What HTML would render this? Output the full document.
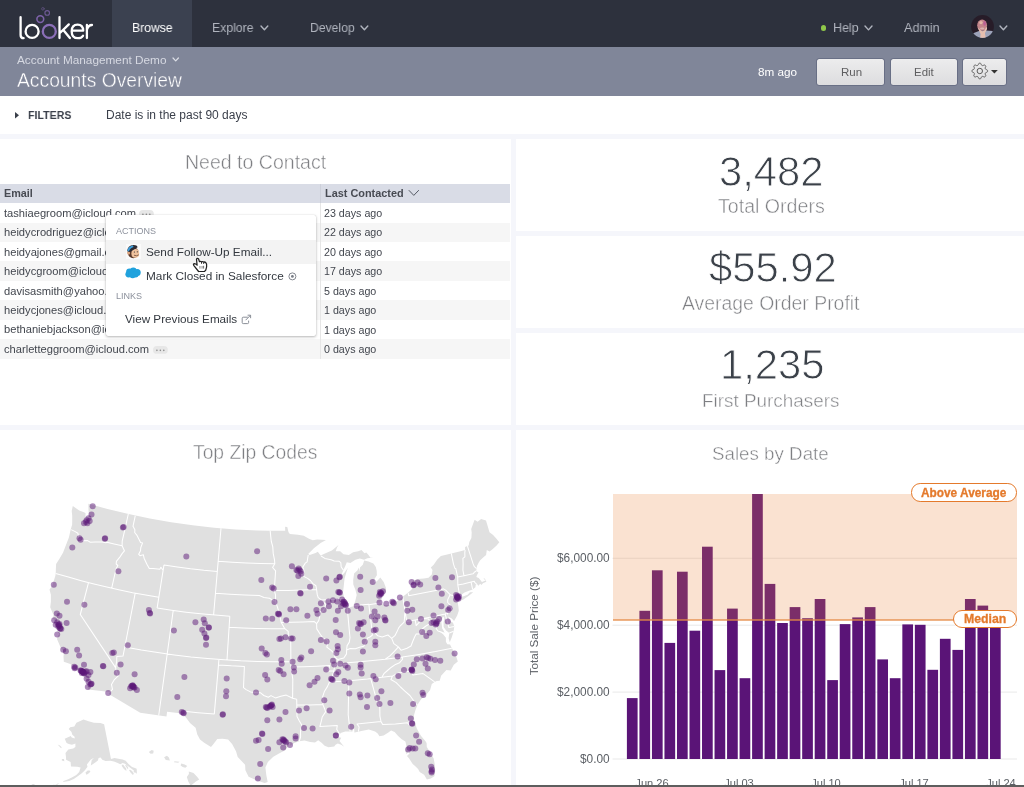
<!DOCTYPE html>
<html>
<head>
<meta charset="utf-8">
<title>Accounts Overview</title>
<style>
*{box-sizing:border-box;margin:0;padding:0}
html,body{width:1024px;height:787px;overflow:hidden;background:#f5f6fb;font-family:"Liberation Sans",sans-serif;color:#3a3f4a}
.abs{position:absolute}
.t{position:absolute;white-space:nowrap;will-change:transform}
#nav{position:absolute;left:0;top:0;width:1024px;height:47px;background:#2d313d}
#nav .tab{position:absolute;left:112px;top:0;width:80px;height:47px;background:#3b4150}
#sub{position:absolute;left:0;top:47px;width:1024px;height:49px;background:#808699}
#filters{position:absolute;left:0;top:96px;width:1024px;height:37.5px;background:#fff}
.panel{position:absolute;background:#fff}
.btn{position:absolute;top:59px;height:25.8px;border-radius:2.5px;background:linear-gradient(#ececed,#dddddf);box-shadow:0 0 0 .8px rgba(75,82,108,.55)}
.big{-webkit-text-stroke:.9px #fff}
.lt{-webkit-text-stroke:.45px #fff}
.lts{-webkit-text-stroke:.4px #808699}
.row{position:absolute;left:0;width:510px;height:19.43px}
</style>
</head>
<body>
<div id="nav"><div class="tab"></div></div>
<svg class="abs" style="left:0;top:0" width="112" height="47" viewBox="0 0 112 47" fill="none" stroke-linecap="round" stroke-linejoin="round">
<path d="M20.6 17.2V34.9Q20.6 38.2 23.6 38.2" stroke="#fff" stroke-width="2.3"/>
<circle cx="32.1" cy="31.4" r="6.5" stroke="#fff" stroke-width="2.3"/>
<circle cx="49.3" cy="31.4" r="6.5" stroke="#8b6fb8" stroke-width="2.3"/>
<circle cx="40.3" cy="19.1" r="3.4" stroke="#7d62a9" stroke-width="1.6"/>
<circle cx="47.2" cy="12.9" r="2.3" stroke="#6f5a96" stroke-width="1.1"/>
<circle cx="42.9" cy="8.8" r="1.3" stroke="#5f5280" stroke-width="0.8"/>
<path d="M59.5 17.2V38.1M60.2 32.8L68.8 24.4M63.3 30L69.9 38.1" stroke="#fff" stroke-width="2.3"/>
<path d="M72.6 30.7H83.2Q83 24.7 77.6 24.7Q71.7 24.7 71.7 31.4Q71.7 38.2 78 38.2Q81.3 38.2 83 35.8" stroke="#fff" stroke-width="2.3"/>
<path d="M86.9 25V38.1M86.9 29.8Q88.2 25 92 25" stroke="#fff" stroke-width="2.3"/>
</svg>
<div class="t" style="left:131.70px;top:17.90px;font-size:13.0px;line-height:20px;color:#fff;transform:scaleX(0.938);transform-origin:0 0;">Browse</div>
<div class="t" style="left:212.20px;top:17.90px;font-size:13.0px;line-height:20px;color:#b0b4be;transform:scaleX(0.942);transform-origin:0 0;">Explore</div>
<svg class="abs" style="left:258.7px;top:24.4px" width="10.8" height="7.7"><path d="M2 2L5.40 5.74L8.80 2" fill="none" stroke="#b0b4be" stroke-width="1.4" stroke-linecap="round" stroke-linejoin="round"/></svg>
<div class="t" style="left:309.50px;top:17.90px;font-size:13.0px;line-height:20px;color:#b0b4be;transform:scaleX(0.938);transform-origin:0 0;">Develop</div>
<svg class="abs" style="left:359.0px;top:24.4px" width="10.8" height="7.7"><path d="M2 2L5.40 5.74L8.80 2" fill="none" stroke="#b0b4be" stroke-width="1.4" stroke-linecap="round" stroke-linejoin="round"/></svg>
<div class="abs" style="left:820.7px;top:24.8px;width:5.8px;height:5.8px;border-radius:50%;background:#8fc74a"></div>
<div class="t" style="left:833.30px;top:17.90px;font-size:13.0px;line-height:20px;color:#b0b4be;transform:scaleX(0.96);transform-origin:0 0;">Help</div>
<svg class="abs" style="left:863.4px;top:24.4px" width="11.0" height="7.9"><path d="M2 2L5.50 5.85L9.00 2" fill="none" stroke="#b0b4be" stroke-width="1.4" stroke-linecap="round" stroke-linejoin="round"/></svg>
<div class="t" style="left:904.10px;top:17.90px;font-size:13.0px;line-height:20px;color:#b0b4be;transform:scaleX(0.97);transform-origin:0 0;">Admin</div>
<svg class="abs" style="left:971px;top:15px" width="23" height="23" viewBox="0 0 23 23">
<defs><clipPath id="av"><circle cx="11.5" cy="11.5" r="11.4"/></clipPath></defs>
<g clip-path="url(#av)"><rect width="23" height="23" fill="#271c28"/>
<path d="M2.2 18.2L9.2 15.6H15.2L21.7 16.1L23 23H0Z" fill="#9ca3ba"/>
<ellipse cx="11.1" cy="10.2" rx="4.9" ry="5.6" fill="#c4858a"/>
<ellipse cx="10" cy="7.6" rx="1.7" ry="1.6" fill="#e3b8a6"/>
<ellipse cx="13.6" cy="8.4" rx="1.3" ry="2.4" fill="#b8509a" opacity=".7"/>
<ellipse cx="11.2" cy="13.6" rx="2.2" ry="1" fill="#e0c0b8" opacity=".8"/>
<path d="M6.3 12.2L8.7 14.3L11.3 16.5L13.5 15.2L15.6 11.3L16.1 13.9L13.9 18.2L14.8 22.7H9.2L9.6 19.1L7.9 15.2Z" fill="#e6bfb0"/>
</g></svg>
<svg class="abs" style="left:998.4px;top:24.4px" width="10.8" height="7.7"><path d="M2 2L5.40 5.74L8.80 2" fill="none" stroke="#b0b4be" stroke-width="1.4" stroke-linecap="round" stroke-linejoin="round"/></svg>
<div id="sub"></div>
<div class="t" style="left:17.20px;top:49.51px;font-size:11.8px;line-height:20px;color:#d6d9e2;">Account Management Demo</div>
<svg class="abs" style="left:171.2px;top:56.1px" width="9.4" height="7.0"><path d="M2 2L4.70 4.97L7.40 2" fill="none" stroke="#dcdfe7" stroke-width="1.2" stroke-linecap="round" stroke-linejoin="round"/></svg>
<div class="t lts" style="left:16.80px;top:70.71px;font-size:19.3px;line-height:20px;color:#fff;">Accounts Overview</div>
<div class="t" style="left:758.30px;top:62.25px;font-size:11.7px;line-height:20px;color:#fff;">8m ago</div>
<div class="btn" style="left:817px;width:67px"></div>
<div class="btn" style="left:890.5px;width:66.5px"></div>
<div class="btn" style="left:962.7px;width:43.5px"></div>
<div class="t" style="left:840.60px;top:62.22px;font-size:11.5px;line-height:20px;color:#5e5e60;">Run</div>
<div class="t" style="left:913.90px;top:62.23px;font-size:11.45px;line-height:20px;color:#5e5e60;">Edit</div>
<svg class="abs" style="left:970px;top:61px" width="20" height="20"><path d="M9.80 2.20L10.11 2.22L10.41 2.28L10.70 2.43L10.95 2.74L11.15 3.23L11.31 3.73L11.48 4.05L11.67 4.24L11.88 4.36L12.10 4.46L12.32 4.54L12.55 4.60L12.82 4.61L13.17 4.50L13.63 4.26L14.12 4.06L14.52 4.02L14.83 4.11L15.09 4.28L15.32 4.48L15.52 4.71L15.69 4.97L15.78 5.28L15.74 5.68L15.54 6.17L15.30 6.63L15.19 6.98L15.20 7.25L15.26 7.48L15.34 7.70L15.44 7.92L15.56 8.13L15.75 8.32L16.07 8.49L16.57 8.65L17.06 8.85L17.37 9.10L17.52 9.39L17.58 9.69L17.60 10.00L17.58 10.31L17.52 10.61L17.37 10.90L17.06 11.15L16.57 11.35L16.07 11.51L15.75 11.68L15.56 11.87L15.44 12.08L15.34 12.30L15.26 12.52L15.20 12.75L15.19 13.02L15.30 13.37L15.54 13.83L15.74 14.32L15.78 14.72L15.69 15.03L15.52 15.29L15.32 15.52L15.09 15.72L14.83 15.89L14.52 15.98L14.12 15.94L13.63 15.74L13.17 15.50L12.82 15.39L12.55 15.40L12.32 15.46L12.10 15.54L11.88 15.64L11.67 15.76L11.48 15.95L11.31 16.27L11.15 16.77L10.95 17.26L10.70 17.57L10.41 17.72L10.11 17.78L9.80 17.80L9.49 17.78L9.19 17.72L8.90 17.57L8.65 17.26L8.45 16.77L8.29 16.27L8.12 15.95L7.93 15.76L7.72 15.64L7.50 15.54L7.28 15.46L7.05 15.40L6.78 15.39L6.43 15.50L5.97 15.74L5.48 15.94L5.08 15.98L4.77 15.89L4.51 15.72L4.28 15.52L4.08 15.29L3.91 15.03L3.82 14.72L3.86 14.32L4.06 13.83L4.30 13.37L4.41 13.02L4.40 12.75L4.34 12.52L4.26 12.30L4.16 12.08L4.04 11.87L3.85 11.68L3.53 11.51L3.03 11.35L2.54 11.15L2.23 10.90L2.08 10.61L2.02 10.31L2.00 10.00L2.02 9.69L2.08 9.39L2.23 9.10L2.54 8.85L3.03 8.65L3.53 8.49L3.85 8.32L4.04 8.13L4.16 7.92L4.26 7.70L4.34 7.48L4.40 7.25L4.41 6.98L4.30 6.63L4.06 6.17L3.86 5.68L3.82 5.28L3.91 4.97L4.08 4.71L4.28 4.48L4.51 4.28L4.77 4.11L5.08 4.02L5.48 4.06L5.97 4.26L6.43 4.50L6.78 4.61L7.05 4.60L7.28 4.54L7.50 4.46L7.72 4.36L7.93 4.24L8.12 4.05L8.29 3.73L8.45 3.23L8.65 2.74L8.90 2.43L9.19 2.28L9.49 2.22Z" fill="none" stroke="#555" stroke-width=".95" stroke-linejoin="round"/><circle cx="9.8" cy="10.0" r="2.7" fill="none" stroke="#555" stroke-width=".95"/></svg>
<svg class="abs" style="left:990.8px;top:69.6px" width="8" height="5"><path d="M0 0H6.8L3.4 3.6Z" fill="#333"/></svg>
<div id="filters"></div>
<svg class="abs" style="left:15px;top:111.6px" width="5" height="7"><path d="M0 0L4 3.2L0 6.4Z" fill="#3a3f4a"/></svg>
<div class="t" style="left:28.20px;top:105.21px;font-size:11.8px;line-height:20px;color:#3a3f4a;font-weight:bold;transform:scaleX(0.898);transform-origin:0 0;">FILTERS</div>
<div class="t" style="left:106.10px;top:105.04px;font-size:12.0px;line-height:20px;color:#3a3f4a;">Date is in the past 90 days</div>
<div class="panel" style="left:0;top:138.5px;width:510.9px;height:286.5px"></div>
<div class="panel" style="left:515.7px;top:138.5px;width:508.5px;height:92.8px"></div>
<div class="panel" style="left:515.7px;top:235.5px;width:508.5px;height:92.5px"></div>
<div class="panel" style="left:515.7px;top:332.5px;width:508.5px;height:92.5px"></div>
<div class="panel" style="left:0;top:429.7px;width:510.9px;height:358px"></div>
<div class="panel" style="left:515.7px;top:429.7px;width:508.5px;height:358px"></div>
<div class="t lt" style="left:185.00px;top:151.98px;font-size:19.55px;line-height:20px;color:#7e7f83;">Need to Contact</div>
<div class="abs" style="left:0;top:183.8px;width:510px;height:19.4px;background:#d9dce6"></div>
<div class="t" style="left:3.75px;top:182.76px;font-size:10.8px;line-height:20px;color:#484b53;font-weight:bold;">Email</div>
<div class="t" style="left:324.50px;top:182.72px;font-size:10.9px;line-height:20px;color:#484b53;font-weight:bold;">Last Contacted</div>
<svg class="abs" style="left:407px;top:188px" width="14" height="10"><path d="M1.8 2.2L6.8 7.4L11.8 2.2" fill="none" stroke="#555a64" stroke-width="1"/></svg>
<div class="t" style="left:3.75px;top:202.79px;font-size:11.15px;line-height:20px;color:#42464e;">tashiaegroom@icloud.com</div>
<div class="t" style="left:324.25px;top:202.94px;font-size:10.7px;line-height:20px;color:#42464e;">23 days ago</div>
<div class="row" style="top:222.63px;background:#f6f6f6"></div>
<div class="t" style="left:3.75px;top:222.22px;font-size:11.15px;line-height:20px;color:#42464e;">heidycrodriguez@icloud.com</div>
<div class="t" style="left:324.25px;top:222.37px;font-size:10.7px;line-height:20px;color:#42464e;">22 days ago</div>
<div class="t" style="left:3.75px;top:241.65px;font-size:11.15px;line-height:20px;color:#42464e;">heidyajones@gmail.com</div>
<div class="t" style="left:324.25px;top:241.80px;font-size:10.7px;line-height:20px;color:#42464e;">20 days ago</div>
<div class="row" style="top:261.49px;background:#f6f6f6"></div>
<div class="t" style="left:3.75px;top:261.08px;font-size:11.15px;line-height:20px;color:#42464e;">heidycgroom@icloud.com</div>
<div class="t" style="left:324.25px;top:261.23px;font-size:10.7px;line-height:20px;color:#42464e;">17 days ago</div>
<div class="t" style="left:3.75px;top:280.51px;font-size:11.15px;line-height:20px;color:#42464e;">davisasmith@yahoo.com</div>
<div class="t" style="left:324.25px;top:280.66px;font-size:10.7px;line-height:20px;color:#42464e;">5 days ago</div>
<div class="row" style="top:300.35px;background:#f6f6f6"></div>
<div class="t" style="left:3.75px;top:299.94px;font-size:11.15px;line-height:20px;color:#42464e;">heidycjones@icloud.com</div>
<div class="t" style="left:324.25px;top:300.09px;font-size:10.7px;line-height:20px;color:#42464e;">1 days ago</div>
<div class="t" style="left:3.75px;top:319.37px;font-size:11.15px;line-height:20px;color:#42464e;">bethaniebjackson@icloud.com</div>
<div class="t" style="left:324.25px;top:319.52px;font-size:10.7px;line-height:20px;color:#42464e;">1 days ago</div>
<div class="row" style="top:339.21px;background:#f6f6f6"></div>
<div class="t" style="left:3.75px;top:338.80px;font-size:11.15px;line-height:20px;color:#42464e;">charletteggroom@icloud.com</div>
<div class="t" style="left:324.25px;top:338.95px;font-size:10.7px;line-height:20px;color:#42464e;">0 days ago</div>
<div class="abs" style="left:319.6px;top:203.2px;width:1px;height:155.4px;background:#e6e6e6"></div>
<div class="abs" style="left:319.6px;top:183.8px;width:1px;height:19.4px;background:#cdd0da"></div>
<svg class="abs" style="left:139.4px;top:210.1px" width="15" height="8"><rect width="14.8" height="7.8" rx="3.9" fill="#e7e7e7"/><circle cx="3.9" cy="4.35" r=".8" fill="#8a8a8a"/><circle cx="7.35" cy="4.35" r=".8" fill="#8a8a8a"/><circle cx="10.8" cy="4.35" r=".8" fill="#8a8a8a"/></svg>
<svg class="abs" style="left:153px;top:345.8px" width="15" height="8"><rect width="14.8" height="7.8" rx="3.9" fill="#e7e7e7"/><circle cx="3.9" cy="4.35" r=".8" fill="#8a8a8a"/><circle cx="7.35" cy="4.35" r=".8" fill="#8a8a8a"/><circle cx="10.8" cy="4.35" r=".8" fill="#8a8a8a"/></svg>
<div class="abs" style="left:105.5px;top:215px;width:210px;height:120.8px;background:#fff;border-radius:2px;box-shadow:0 1px 3px rgba(0,0,0,.28),0 0 1px rgba(0,0,0,.22)"></div>
<div class="abs" style="left:105.5px;top:240.1px;width:210px;height:23.6px;background:#f3f3f3"></div>
<div class="t" style="left:115.50px;top:220.63px;font-size:9.0px;line-height:20px;color:#8c919c;">ACTIONS</div>
<div class="t" style="left:145.75px;top:242.18px;font-size:11.75px;line-height:20px;color:#33383f;">Send Follow-Up Email...</div>
<div class="t" style="left:146.25px;top:265.91px;font-size:11.8px;line-height:20px;color:#33383f;">Mark Closed in Salesforce</div>
<div class="t" style="left:115.50px;top:286.38px;font-size:9.0px;line-height:20px;color:#8c919c;">LINKS</div>
<div class="t" style="left:125.00px;top:308.95px;font-size:11.7px;line-height:20px;color:#33383f;">View Previous Emails</div>
<svg class="abs" style="left:125.5px;top:244.3px" width="15" height="15" viewBox="0 0 15 15">
<rect width="15" height="15" fill="#fafafa"/>
<ellipse cx="7.2" cy="8.6" rx="5.4" ry="5.6" fill="#5a3a2c"/>
<ellipse cx="2.6" cy="9" rx="1.5" ry="1.8" fill="#d9a27e"/>
<ellipse cx="9.3" cy="9.4" rx="3.9" ry="4.3" fill="#efc29d"/>
<path d="M1.2 7.2Q1.5 1.2 7.5 0.9Q11 0.8 11.6 3.2L4 8Z" fill="#2b2b33"/>
<path d="M1.3 6.6Q2.2 2.3 6.8 1.4L7.6 3Q3.8 4.2 2.9 7.4Z" fill="#3d9fdc"/>
<path d="M8 11.2Q10.5 12.6 12.8 10.8" fill="none" stroke="#5a3a2c" stroke-width=".7"/>
<circle cx="8.4" cy="8" r=".6" fill="#2b2b33"/><circle cx="11.3" cy="7.8" r=".6" fill="#2b2b33"/>
</svg>
<svg class="abs" style="left:124.8px;top:266.8px" width="16.5" height="12" viewBox="0 0 16.5 12">
<g fill="#20a2dd"><circle cx="4.4" cy="4.6" r="3.2"/><circle cx="8.3" cy="3.9" r="3.3"/><circle cx="12.2" cy="5.6" r="3.5"/><circle cx="3.5" cy="7.3" r="3.1"/><circle cx="7.6" cy="7.8" r="3.4"/><circle cx="10.6" cy="7.6" r="3"/></g>
</svg>
<svg class="abs" style="left:287.6px;top:271.9px" width="9" height="9"><circle cx="4.4" cy="4.4" r="3.5" fill="none" stroke="#777c85" stroke-width=".9"/><circle cx="4.4" cy="4.4" r="1.4" fill="#777c85"/></svg>
<svg class="abs" style="left:241px;top:313.6px" width="11" height="11" fill="none" stroke="#8a8f98" stroke-width="1"><path d="M6.8 3.2H2.2Q1.2 3.2 1.2 4.2V8.6Q1.2 9.6 2.2 9.6H6.6Q7.6 9.6 7.6 8.6V6.6"/><path d="M4.6 6.2L9.6 1.2M6.6 1.2H9.6V4.2"/></svg>
<svg class="abs" style="left:192px;top:257px" width="17" height="17" viewBox="0 0 17 17">
<path d="M4.5 2.2Q5.2 0.9 6.5 1.7L7.5 4.7Q8.6 3.9 9.5 4.9Q10.8 4.1 11.7 5.1Q13 4.7 14 5.9L14.6 7.2Q15 10 13.8 13L12.6 14.4L6.6 14.5L1.7 8.3Q1 7 2.2 6.6Q3.6 6.5 5.1 8.2Z" fill="#fff" stroke="#222" stroke-width="1.25" stroke-linejoin="round"/>
<path d="M9.5 5V6.8M11.7 5.2V7" stroke="#222" stroke-width=".9"/>
<path d="M7.7 9V11.6M9 9V11.6M10.3 9V11.6" stroke="#8a8a8a" stroke-width=".7"/><path d="M11.6 8.8V11.6" stroke="#333" stroke-width=".7"/>
</svg>
<div class="t big" style="left:719.20px;top:146.72px;font-size:41.8px;line-height:50px;color:#3b4149;">3,482</div>
<div class="t lt" style="left:717.60px;top:196.21px;font-size:19.6px;line-height:20px;color:#7e7f83;">Total Orders</div>
<div class="t big" style="left:708.50px;top:243.42px;font-size:41.8px;line-height:50px;color:#3b4149;">$55.92</div>
<div class="t lt" style="left:682.10px;top:293.48px;font-size:19.4px;line-height:20px;color:#7e7f83;">Average Order Profit</div>
<div class="t big" style="left:719.50px;top:340.42px;font-size:41.8px;line-height:50px;color:#3b4149;">1,235</div>
<div class="t lt" style="left:702.30px;top:390.65px;font-size:18.9px;line-height:20px;color:#7e7f83;">First Purchasers</div>
<div class="t lt" style="left:193.20px;top:443.31px;font-size:19.3px;line-height:20px;color:#7e7f83;">Top Zip Codes</div>
<svg class="abs" style="left:0;top:430px" width="511" height="357" viewBox="0 0 511 357"><path d="M72.8 76.0L79.2 80.5L83.3 82.1L85.5 83.0L85.6 88.7L82.0 93.2L85.8 92.1L86.8 88.4L88.9 85.1L88.5 79.9L88.4 73.8L107.5 79.0L128.6 84.1L149.8 88.5L171.1 92.2L192.6 95.3L214.1 97.7L235.7 99.4L257.4 100.4L270.4 100.7L285.2 100.7L285.1 96.7L287.3 97.0L288.5 102.3L289.9 103.9L297.9 104.8L303.8 105.7L309.0 108.7L312.8 110.2L317.1 109.4L326.0 110.0L320.6 113.0L313.9 118.2L308.2 124.1L309.7 124.9L315.6 123.0L317.8 121.8L320.6 125.5L326.1 122.9L331.9 120.4L338.5 115.0L336.9 117.8L335.7 121.2L340.2 121.3L343.5 124.3L348.8 124.9L353.1 122.3L358.2 121.2L361.5 120.0L364.5 123.2L366.3 122.4L368.5 124.9L370.3 127.4L373.4 127.5L367.4 128.3L364.1 129.8L359.8 128.6L355.4 129.7L350.4 132.9L346.8 132.2L345.3 136.1L343.4 140.1L340.8 146.4L344.4 142.8L347.9 137.7L346.3 142.6L344.5 148.8L343.9 154.8L343.0 162.6L344.3 168.5L346.5 175.5L349.1 177.8L353.0 175.9L355.0 171.9L356.7 165.1L355.4 159.8L353.3 154.5L353.2 150.1L354.1 143.5L357.3 140.4L358.9 137.5L359.4 141.8L360.0 137.4L362.8 134.8L364.2 130.5L368.5 131.4L373.4 133.5L375.8 137.1L376.7 140.8L376.9 145.2L374.6 148.8L373.6 152.7L376.9 151.2L380.3 147.4L383.7 151.9L386.1 158.2L385.7 162.7L382.9 165.8L381.8 169.3L379.8 173.1L384.6 175.0L388.6 175.0L394.2 173.6L399.9 168.8L405.7 164.6L411.4 159.7L413.8 155.4L411.9 151.2L417.5 148.9L423.8 148.5L428.5 147.8L431.8 144.4L432.5 140.0L430.8 137.6L433.7 134.7L437.3 129.5L440.9 125.9L451.3 123.4L461.4 120.9L465.1 119.9L465.1 117.1L468.7 115.6L469.3 112.1L471.4 108.1L471.7 102.4L471.2 99.1L474.6 89.7L477.6 91.7L481.1 89.0L486.0 90.6L489.5 102.2L493.1 105.1L496.7 109.1L499.3 112.3L496.6 115.4L492.8 118.9L489.6 121.5L486.8 120.1L486.1 124.9L482.6 128.1L480.0 130.6L478.6 132.7L477.0 135.9L476.6 138.7L476.2 141.0L478.5 142.6L477.0 145.0L476.3 146.9L478.7 148.0L480.6 150.3L481.9 152.0L485.6 150.6L483.4 148.4L484.8 148.5L486.4 151.8L483.0 153.2L481.4 154.9L480.3 153.8L478.0 156.1L475.8 154.4L475.4 157.3L472.6 159.4L468.3 160.9L464.5 162.4L461.0 164.9L459.2 166.7L458.1 168.5L458.2 169.2L463.0 166.4L467.6 164.8L469.9 162.2L473.2 162.2L468.8 165.8L463.0 169.8L458.0 171.5L457.0 171.0L457.8 172.8L458.4 176.9L458.8 180.7L457.2 185.6L454.1 191.0L451.7 188.5L448.1 186.5L447.1 184.5L448.8 188.0L450.1 191.1L453.0 192.7L454.3 196.4L453.6 201.2L451.9 207.0L449.8 212.3L448.6 208.3L449.3 203.1L446.1 200.4L443.6 197.0L443.6 192.5L444.3 187.9L443.1 186.4L441.0 190.3L441.6 193.5L442.2 198.4L443.5 200.4L444.6 203.0L438.9 201.3L442.9 203.9L445.9 207.7L445.9 211.7L447.3 214.2L450.0 214.5L451.9 218.2L455.7 224.7L457.8 231.6L453.8 234.7L450.7 240.4L446.4 240.1L441.1 245.7L439.7 250.7L436.7 251.0L434.6 251.9L431.8 254.1L430.1 260.0L427.5 263.2L424.7 265.9L421.1 269.3L418.9 272.4L417.4 275.1L415.4 280.2L413.9 285.4L414.2 290.3L415.2 293.5L416.9 298.7L420.9 305.8L425.7 311.6L426.6 313.1L426.8 316.9L430.5 322.9L433.7 328.4L434.9 335.3L435.2 341.0L434.4 346.3L430.8 348.5L426.9 349.5L424.1 344.7L419.7 342.1L418.1 339.1L415.3 336.2L412.7 333.9L409.1 328.4L407.0 325.9L409.5 323.4L408.3 321.4L406.7 324.3L405.3 321.3L406.3 315.6L405.4 311.4L401.7 309.2L397.9 305.8L394.6 301.9L391.1 300.5L388.0 302.7L383.6 305.4L379.4 306.2L377.7 303.4L375.1 301.5L368.8 299.6L361.4 300.9L358.2 301.7L354.4 302.4L354.1 298.0L352.8 299.2L352.5 301.4L349.2 301.5L345.4 301.4L341.3 302.8L339.5 304.3L337.3 305.3L334.4 304.4L331.7 306.2L336.9 307.0L341.2 307.8L339.5 311.1L342.1 314.2L344.2 316.8L341.2 314.8L337.8 313.4L335.5 314.7L334.2 316.4L328.5 317.3L324.6 315.8L321.6 312.7L318.2 310.2L315.0 312.5L310.2 312.1L304.5 310.4L299.3 311.3L294.2 313.1L290.4 315.8L289.4 311.5L289.0 315.3L285.2 320.2L279.0 323.5L273.3 326.7L267.9 332.1L265.4 337.5L266.3 345.1L267.7 352.0L264.7 353.1L257.4 350.8L248.6 346.8L245.4 340.2L245.1 334.8L237.7 326.9L236.1 321.4L232.1 314.1L228.1 309.6L222.5 308.7L217.3 308.9L213.1 314.6L211.0 316.9L207.4 314.7L204.2 312.8L200.0 309.6L197.3 304.5L195.6 297.8L190.0 292.9L186.3 288.1L182.3 283.5L167.1 281.7L166.5 286.6L140.2 282.8L108.7 264.1L109.9 261.9L88.1 259.4L87.5 255.7L87.2 251.7L83.8 246.4L81.6 244.2L79.8 243.7L79.6 240.9L77.0 240.2L73.9 237.8L70.3 234.0L63.8 231.8L63.5 226.6L63.8 223.9L63.0 220.8L60.5 217.3L57.0 208.9L57.9 205.7L59.3 203.9L57.6 201.7L55.6 194.8L56.5 191.7L53.0 188.4L53.5 185.1L50.2 177.2L50.9 171.7L50.9 164.8L49.5 159.4L52.2 156.1L55.3 146.1L55.7 143.4L56.1 133.9L59.3 129.0L63.0 122.7L65.4 116.6L68.9 107.5L70.7 99.5L72.1 94.8L72.2 92.0L72.2 85.8L71.7 81.1ZM104.1 294.2L100.5 293.1L93.9 292.8L88.6 291.2L83.5 289.5L79.7 291.3L76.4 292.8L74.3 296.4L70.2 297.2L68.7 299.0L71.5 302.0L72.3 304.8L74.6 306.7L74.7 308.6L71.7 307.4L70.8 306.1L64.7 308.8L66.6 313.1L68.8 313.9L72.0 314.8L75.4 313.6L75.4 317.1L73.2 318.4L68.3 319.6L65.5 323.0L66.0 327.0L66.1 329.7L70.6 331.9L71.0 336.6L77.3 336.8L80.6 337.4L79.2 341.9L76.3 345.1L71.8 347.4L67.6 349.6L63.5 350.9L63.1 352.0L69.2 351.0L73.8 349.1L77.4 346.4L81.8 343.2L84.7 340.6L87.5 336.8L86.9 334.5L90.6 329.8L94.0 327.7L91.7 330.2L91.1 333.6L90.8 335.5L95.3 332.6L97.9 330.5L98.6 328.1L100.6 327.6L102.3 329.7L105.6 331.1L110.3 330.7L114.0 331.5L117.7 333.0L120.3 334.3L122.6 332.9L124.9 333.8L127.8 336.1L130.9 338.3L133.5 340.2L135.2 342.5L136.9 343.7L136.7 339.1L136.3 338.4L132.0 337.1L128.5 333.9L125.7 330.8L122.6 329.5L119.7 328.9L114.5 328.1L111.0 329.0ZM121.7 334.7L121.9 336.3L123.9 338.9L126.4 340.9L126.2 338.6L124.4 336.3L123.3 334.7ZM124.9 335.0L126.4 337.3L127.9 339.3L128.3 337.9L127.0 335.6ZM129.0 340.1L130.5 342.5L132.9 344.9L133.9 343.7L132.1 341.1L130.2 339.7ZM133.6 341.0L133.9 342.5L135.0 342.5L134.5 341.1ZM89.7 340.5L90.4 341.7L87.9 344.0L86.3 344.8L85.5 342.5L87.7 340.6ZM64.0 328.9L64.3 331.3L61.8 330.4L61.9 328.9ZM57.6 314.6L61.1 318.2L61.7 317.2L59.9 315.6ZM59.3 352.9L57.3 354.8L55.2 354.8L57.3 353.7ZM55.2 354.0L53.0 355.5L52.0 355.6L54.1 354.5ZM44.0 355.9L40.3 356.0L38.2 354.9L41.9 354.9ZM35.1 354.6L33.1 355.2L31.2 354.1L34.1 353.9ZM151.7 320.0L153.7 320.8L153.2 323.5L150.6 323.8L148.8 321.9ZM166.9 325.8L168.9 327.4L169.9 330.4L165.8 330.1L164.1 327.2ZM174.5 331.2L179.6 331.7L178.1 332.8L174.0 332.3ZM181.2 333.4L184.7 334.4L187.3 336.0L185.3 337.7L182.7 337.1L180.6 335.5ZM188.8 341.4L193.5 343.0L197.1 346.8L199.2 349.5L195.6 351.7L190.7 355.7L188.4 351.7L186.8 346.9L188.9 344.1Z" fill="#e0e0e0"/>
<path d="M71.1 99.6L75.2 101.6L77.9 103.3L78.5 106.4L78.5 109.2L82.0 110.7L87.6 110.6L90.3 112.2L95.1 112.1L102.1 112.0L105.8 112.8L106.9 112.3L114.1 114.0L122.1 115.8M128.3 84.0L124.8 99.8L122.2 111.2L122.1 115.8M122.1 115.8L124.4 120.8L122.1 123.6L120.2 126.6L116.4 131.3L116.2 134.0L117.8 135.5L116.0 139.0L111.7 158.2M55.7 143.4L68.4 147.1L81.2 150.7L94.0 154.0L106.8 157.1L119.8 160.0L132.7 162.7L145.7 165.1L158.8 167.3M88.5 152.6L80.3 184.5L115.6 237.6M115.6 237.6L116.2 241.0L118.3 245.9L114.4 249.6L111.5 254.6L112.5 259.3L109.9 261.9M115.6 237.6L116.7 231.1L116.8 226.4L123.0 226.1L124.8 217.0M124.8 217.0L135.2 163.1M124.8 217.0L141.3 220.0L157.7 222.6L174.3 224.9L190.9 226.9L207.5 228.5L224.1 229.8L240.8 230.8L257.5 231.4L274.2 231.7L290.9 231.6M135.3 85.6L133.0 96.3L134.9 99.8L134.7 102.5L136.8 105.1L138.7 108.8L140.6 112.5L142.6 112.9L140.8 117.5L140.5 120.8L138.7 124.3L140.0 125.7L143.3 124.7L144.1 128.2L146.9 134.2L149.3 138.5L153.2 138.6L159.8 139.2L160.9 137.2L163.1 140.3M164.0 134.9L157.1 178.1M164.0 134.9L177.3 136.9L190.6 138.7L203.9 140.2L217.3 141.4M157.1 178.1L171.6 180.3L186.1 182.2L200.6 183.8L215.2 185.1L229.8 186.2M173.2 180.5L167.2 224.0L158.7 285.5M221.0 98.3L213.6 185.0M218.2 131.3L232.3 132.3L246.5 133.1L260.6 133.6L274.8 133.8M215.5 163.2L230.0 164.3L244.7 165.1L259.3 165.6L264.0 167.4L269.5 168.3L274.7 171.3M229.8 186.2L229.1 197.2L227.0 230.0M229.1 197.2L243.0 197.9L257.0 198.4L270.9 198.7L284.8 198.7M218.9 229.5L218.5 234.9L214.3 284.1M214.3 284.1L198.0 282.7L181.8 281.0L182.3 283.5M218.5 234.9L231.4 235.8L244.4 236.4L243.5 257.7L246.1 259.6L250.5 261.9L255.8 262.6L260.3 262.7L263.8 265.5L268.3 267.3L271.0 265.6L275.4 267.9L280.8 266.2L286.2 265.1L292.6 268.3L296.7 269.3M290.9 231.6L291.0 237.1L292.8 249.1L292.6 268.3M296.7 269.3L297.0 286.4L299.1 290.6L301.7 294.9L300.5 301.5L300.6 306.9L299.3 311.3M296.8 275.1L309.8 274.9L322.8 274.4M290.9 231.6L290.7 208.5L288.2 205.3L288.2 201.4L284.8 198.7L281.1 192.2L280.3 187.8L279.0 182.3L277.4 176.8L275.5 171.3L275.5 164.8L274.3 160.4L275.6 140.8L272.6 137.5L274.8 133.8L274.5 129.9L273.2 123.4L272.8 116.9L271.3 111.5L270.7 106.1L270.2 100.7M274.3 160.4L288.4 160.4L302.5 160.0L316.6 159.5M280.9 192.4L291.9 192.2L303.0 191.9L314.0 191.4L316.6 193.7M291.0 237.1L303.9 236.8L316.8 236.3L329.7 235.6L328.0 241.2L333.9 240.8M308.2 125.0L307.1 131.8L305.2 133.2L302.8 137.1L303.9 140.4L303.7 146.4L307.6 148.4L310.4 150.5L312.9 153.6L315.9 155.7L316.6 159.5L317.2 164.4L318.2 167.6L321.7 170.1L325.7 174.3L324.9 178.2L322.7 181.1L319.1 182.4L319.7 186.7L318.7 190.6L316.6 193.7L316.8 198.9L320.2 204.3L323.4 208.5L327.7 209.9L328.0 212.6L326.8 217.1L330.8 220.1L334.5 223.7L334.7 227.0L337.9 229.6L337.8 234.0L335.3 235.2L334.2 238.6L333.9 240.8L332.5 245.3L331.3 250.6L329.4 252.1L327.4 256.6L324.5 261.2L322.6 266.8L323.3 271.1L322.8 274.4L324.6 278.7L325.6 281.9L322.2 287.0L321.5 290.4L319.9 296.4L337.3 295.5L336.7 299.3L339.5 304.1M321.0 126.0L324.9 128.4L331.1 129.7L334.2 131.1L338.8 131.2L340.8 132.7L341.2 137.0L343.4 140.1M321.7 170.1L333.0 169.4L344.3 168.5M347.1 176.4L349.5 202.7L350.0 207.7L349.3 212.1L347.1 215.6L346.6 220.1M405.1 181.4L404.7 184.2L404.5 188.6L404.1 192.1L400.1 196.0L398.7 197.9L396.8 202.1L394.9 205.7L391.7 208.4L389.8 206.7L387.9 205.0L382.2 206.9L377.8 205.8L374.9 202.8L372.3 203.1L372.3 205.3L369.5 207.3L367.5 208.1L365.5 213.1L363.7 216.2L359.6 217.2L355.4 218.7L350.3 218.6L346.6 220.1L346.5 223.9L343.8 228.0L337.9 229.6M372.3 203.1L368.9 174.8M351.4 176.0L360.1 175.1L368.8 174.2L368.9 174.8L379.8 173.1M402.7 166.9L405.1 181.4L406.7 191.4M406.7 191.4L419.6 189.2L432.5 186.7L445.2 184.1M408.2 162.8L408.7 165.7L408.7 165.7L420.3 163.6L431.9 161.3L443.4 158.9L445.7 160.1L450.1 164.7L447.7 169.7L447.7 172.5L452.3 177.1L449.3 181.7L448.1 182.6L447.1 184.5M450.1 164.7L457.3 167.0M448.1 182.6L446.9 182.5L445.2 184.1L448.9 197.5L454.3 196.4M415.2 190.0L416.2 195.6L419.3 192.2L421.3 189.6L424.9 188.4L428.4 188.9L430.3 191.6L432.7 193.6L436.3 194.8L436.2 198.5L438.0 201.0L441.2 202.0L444.6 203.5M453.6 201.2L449.3 203.1M430.3 191.6L429.9 193.8L425.9 196.0L422.2 199.0L419.2 204.0L416.2 203.9L414.6 207.0L412.8 211.2L411.0 216.0L407.0 218.3L401.2 220.3L398.4 216.9L393.8 213.6L391.7 208.4M398.4 216.9L394.4 221.3L389.9 225.8L385.3 229.2M451.9 218.2L435.5 221.5L419.0 224.4L402.4 227.0M402.4 227.0L385.3 229.2L385.3 229.2L372.7 230.5L360.1 231.7L347.5 232.7L347.6 234.3L335.3 235.2M402.4 227.0L402.4 229.5L399.6 232.7L395.5 234.4L391.4 237.2L387.5 240.5L383.9 243.7L381.9 247.3M392.6 245.9L380.0 247.5L367.4 249.0L354.7 250.2L342.0 251.3L329.4 252.1M392.6 245.9L398.4 242.9L410.2 241.1L411.4 242.0L413.0 244.9L422.8 243.4L434.6 251.9M392.6 245.9L390.9 249.5L396.2 252.6L400.5 257.0L404.6 260.8L409.9 265.5L413.5 270.5L417.4 275.1M370.7 248.6L377.0 271.4L379.8 277.3L379.9 286.1L381.0 291.5L382.7 294.6L395.4 294.1L407.5 292.7L409.2 294.9L409.1 290.5L414.2 290.3M381.0 291.5L369.0 292.8L357.0 293.9L359.1 297.0L358.4 301.7M347.9 250.8L348.8 251.8L348.2 284.8L350.1 301.4M451.3 123.4L453.5 134.1L454.9 138.3L455.8 138.6L457.7 147.1L457.8 155.0L459.3 163.1L458.4 165.6L459.2 166.7M465.1 119.9L464.8 122.8L464.9 126.8L462.9 128.4L463.1 134.0L462.9 140.2L464.0 145.8M457.7 147.1L464.0 145.8L473.0 143.8L474.3 142.3L476.2 141.0M457.8 155.0L463.3 153.9L471.1 152.0L474.3 151.3L474.7 152.4L476.6 154.2L477.8 156.1M471.1 152.1L472.6 159.4M467.4 116.0L470.1 124.3L473.1 133.9L474.4 136.7L476.6 138.7" fill="none" stroke="#fff" stroke-width="1.05" stroke-linejoin="round"/><g fill="#5b1778" fill-opacity=".5"><circle cx="81.5" cy="241.0" r="3"/><circle cx="82.5" cy="242.0" r="3"/><circle cx="80.5" cy="240.5" r="3"/><circle cx="83.0" cy="241.5" r="3"/><circle cx="81.8" cy="243.0" r="3"/><circle cx="84.0" cy="243.5" r="3"/><circle cx="133.2" cy="256.5" r="3"/><circle cx="133.8" cy="257.5" r="3"/><circle cx="132.6" cy="255.8" r="3"/><circle cx="58.5" cy="194.5" r="3"/><circle cx="59.5" cy="196.0" r="3"/><circle cx="60.2" cy="198.5" r="3"/><circle cx="92.7" cy="76.2" r="3"/><circle cx="91.5" cy="84.5" r="3"/><circle cx="88.5" cy="88.3" r="3"/><circle cx="85.9" cy="92.1" r="3"/><circle cx="84.0" cy="93.2" r="3"/><circle cx="87.4" cy="93.2" r="3"/><circle cx="89.7" cy="91.0" r="3"/><circle cx="86.6" cy="90.2" r="3"/><circle cx="123.6" cy="97.0" r="3"/><circle cx="122.9" cy="97.4" r="3"/><circle cx="79.5" cy="108.3" r="3"/><circle cx="80.6" cy="109.8" r="3"/><circle cx="105.1" cy="108.3" r="3"/><circle cx="104.8" cy="108.7" r="3"/><circle cx="72.3" cy="117.4" r="3"/><circle cx="118.4" cy="141.2" r="3"/><circle cx="186.3" cy="126.5" r="3"/><circle cx="53.8" cy="154.8" r="3"/><circle cx="67.0" cy="171.8" r="3"/><circle cx="84.4" cy="174.8" r="3"/><circle cx="56.8" cy="183.5" r="3"/><circle cx="59.5" cy="185.7" r="3"/><circle cx="54.2" cy="190.3" r="3"/><circle cx="57.2" cy="192.2" r="3"/><circle cx="59.5" cy="194.0" r="3"/><circle cx="58.3" cy="196.7" r="3"/><circle cx="61.3" cy="198.9" r="3"/><circle cx="60.2" cy="198.2" r="3"/><circle cx="66.6" cy="192.9" r="3"/><circle cx="57.2" cy="204.6" r="3"/><circle cx="55.7" cy="194.8" r="3"/><circle cx="58.7" cy="195.2" r="3"/><circle cx="63.2" cy="219.7" r="3"/><circle cx="65.9" cy="221.2" r="3"/><circle cx="77.2" cy="219.7" r="3"/><circle cx="79.1" cy="225.4" r="3"/><circle cx="74.2" cy="236.7" r="3"/><circle cx="75.3" cy="237.5" r="3"/><circle cx="74.6" cy="238.2" r="3"/><circle cx="84.0" cy="234.8" r="3"/><circle cx="81.0" cy="240.5" r="3"/><circle cx="82.9" cy="242.0" r="3"/><circle cx="84.7" cy="243.1" r="3"/><circle cx="86.6" cy="241.2" r="3"/><circle cx="83.6" cy="242.7" r="3"/><circle cx="85.5" cy="241.6" r="3"/><circle cx="82.1" cy="241.2" r="3"/><circle cx="88.5" cy="245.0" r="3"/><circle cx="90.4" cy="242.0" r="3"/><circle cx="102.9" cy="236.0" r="3"/><circle cx="103.3" cy="236.3" r="3"/><circle cx="86.6" cy="248.8" r="3"/><circle cx="88.5" cy="251.8" r="3"/><circle cx="90.4" cy="254.5" r="3"/><circle cx="91.2" cy="254.1" r="3"/><circle cx="87.8" cy="257.1" r="3"/><circle cx="91.5" cy="253.7" r="3"/><circle cx="108.2" cy="263.1" r="3"/><circle cx="112.3" cy="223.1" r="3"/><circle cx="113.8" cy="222.4" r="3"/><circle cx="120.6" cy="234.4" r="3"/><circle cx="116.8" cy="242.7" r="3"/><circle cx="134.6" cy="244.3" r="3"/><circle cx="131.2" cy="256.3" r="3"/><circle cx="132.7" cy="255.2" r="3"/><circle cx="134.6" cy="257.5" r="3"/><circle cx="130.1" cy="258.2" r="3"/><circle cx="136.9" cy="260.1" r="3"/><circle cx="133.1" cy="256.7" r="3"/><circle cx="131.9" cy="256.0" r="3"/><circle cx="148.9" cy="180.1" r="3"/><circle cx="149.7" cy="183.1" r="3"/><circle cx="150.1" cy="183.5" r="3"/><circle cx="127.8" cy="215.2" r="3"/><circle cx="195.4" cy="192.2" r="3"/><circle cx="203.7" cy="189.5" r="3"/><circle cx="204.8" cy="193.3" r="3"/><circle cx="208.6" cy="197.4" r="3"/><circle cx="209.0" cy="197.4" r="3"/><circle cx="202.2" cy="199.7" r="3"/><circle cx="204.4" cy="203.5" r="3"/><circle cx="206.0" cy="208.0" r="3"/><circle cx="206.3" cy="207.6" r="3"/><circle cx="206.0" cy="214.8" r="3"/><circle cx="173.9" cy="200.5" r="3"/><circle cx="184.4" cy="246.9" r="3"/><circle cx="177.3" cy="266.9" r="3"/><circle cx="181.8" cy="282.0" r="3"/><circle cx="183.7" cy="283.2" r="3"/><circle cx="183.3" cy="282.8" r="3"/><circle cx="226.7" cy="248.4" r="3"/><circle cx="226.3" cy="261.3" r="3"/><circle cx="226.0" cy="266.2" r="3"/><circle cx="222.6" cy="284.7" r="3"/><circle cx="222.9" cy="284.3" r="3"/><circle cx="257.1" cy="121.2" r="3"/><circle cx="261.3" cy="149.9" r="3"/><circle cx="272.2" cy="157.4" r="3"/><circle cx="273.7" cy="158.5" r="3"/><circle cx="274.5" cy="172.1" r="3"/><circle cx="277.9" cy="183.8" r="3"/><circle cx="279.0" cy="184.6" r="3"/><circle cx="278.7" cy="183.8" r="3"/><circle cx="265.8" cy="188.4" r="3"/><circle cx="272.2" cy="188.8" r="3"/><circle cx="286.2" cy="190.3" r="3"/><circle cx="291.9" cy="136.3" r="3"/><circle cx="296.4" cy="140.0" r="3"/><circle cx="298.7" cy="138.5" r="3"/><circle cx="300.6" cy="141.2" r="3"/><circle cx="298.3" cy="146.1" r="3"/><circle cx="301.3" cy="143.8" r="3"/><circle cx="297.5" cy="140.8" r="3"/><circle cx="299.4" cy="140.0" r="3"/><circle cx="310.0" cy="156.7" r="3"/><circle cx="300.2" cy="163.1" r="3"/><circle cx="300.6" cy="163.5" r="3"/><circle cx="290.4" cy="179.3" r="3"/><circle cx="296.4" cy="179.3" r="3"/><circle cx="307.4" cy="185.7" r="3"/><circle cx="316.4" cy="180.1" r="3"/><circle cx="317.5" cy="183.8" r="3"/><circle cx="323.6" cy="180.1" r="3"/><circle cx="320.9" cy="173.3" r="3"/><circle cx="328.5" cy="171.4" r="3"/><circle cx="328.9" cy="176.3" r="3"/><circle cx="326.2" cy="148.4" r="3"/><circle cx="336.4" cy="150.6" r="3"/><circle cx="339.8" cy="146.8" r="3"/><circle cx="339.4" cy="147.2" r="3"/><circle cx="339.8" cy="162.7" r="3"/><circle cx="338.3" cy="161.9" r="3"/><circle cx="339.4" cy="162.3" r="3"/><circle cx="342.1" cy="169.5" r="3"/><circle cx="344.0" cy="172.1" r="3"/><circle cx="345.9" cy="175.2" r="3"/><circle cx="342.8" cy="173.3" r="3"/><circle cx="341.0" cy="176.3" r="3"/><circle cx="345.1" cy="173.3" r="3"/><circle cx="344.4" cy="174.0" r="3"/><circle cx="343.6" cy="171.4" r="3"/><circle cx="345.5" cy="174.4" r="3"/><circle cx="347.8" cy="180.8" r="3"/><circle cx="337.9" cy="180.8" r="3"/><circle cx="333.0" cy="170.3" r="3"/><circle cx="337.2" cy="171.4" r="3"/><circle cx="360.2" cy="146.8" r="3"/><circle cx="360.6" cy="160.1" r="3"/><circle cx="372.7" cy="152.1" r="3"/><circle cx="379.8" cy="161.9" r="3"/><circle cx="381.4" cy="163.8" r="3"/><circle cx="382.9" cy="161.2" r="3"/><circle cx="379.1" cy="165.7" r="3"/><circle cx="380.6" cy="163.1" r="3"/><circle cx="381.0" cy="162.7" r="3"/><circle cx="380.2" cy="164.2" r="3"/><circle cx="356.8" cy="175.9" r="3"/><circle cx="361.0" cy="178.6" r="3"/><circle cx="379.5" cy="172.5" r="3"/><circle cx="386.3" cy="173.7" r="3"/><circle cx="392.3" cy="171.8" r="3"/><circle cx="393.8" cy="173.3" r="3"/><circle cx="393.1" cy="172.5" r="3"/><circle cx="399.9" cy="167.6" r="3"/><circle cx="374.6" cy="181.6" r="3"/><circle cx="377.6" cy="186.5" r="3"/><circle cx="371.9" cy="186.5" r="3"/><circle cx="384.4" cy="187.6" r="3"/><circle cx="385.5" cy="190.6" r="3"/><circle cx="385.1" cy="189.9" r="3"/><circle cx="375.3" cy="190.3" r="3"/><circle cx="359.1" cy="192.9" r="3"/><circle cx="361.0" cy="194.0" r="3"/><circle cx="363.6" cy="192.2" r="3"/><circle cx="360.2" cy="193.7" r="3"/><circle cx="357.9" cy="198.6" r="3"/><circle cx="362.9" cy="204.6" r="3"/><circle cx="375.7" cy="199.7" r="3"/><circle cx="373.8" cy="200.5" r="3"/><circle cx="364.7" cy="211.8" r="3"/><circle cx="375.3" cy="211.8" r="3"/><circle cx="375.3" cy="215.2" r="3"/><circle cx="362.9" cy="221.6" r="3"/><circle cx="335.7" cy="189.9" r="3"/><circle cx="336.0" cy="202.3" r="3"/><circle cx="340.2" cy="205.0" r="3"/><circle cx="320.9" cy="209.9" r="3"/><circle cx="326.6" cy="211.4" r="3"/><circle cx="337.6" cy="215.9" r="3"/><circle cx="337.9" cy="219.3" r="3"/><circle cx="336.4" cy="223.1" r="3"/><circle cx="311.1" cy="221.2" r="3"/><circle cx="411.6" cy="152.1" r="3"/><circle cx="413.5" cy="155.2" r="3"/><circle cx="413.8" cy="154.8" r="3"/><circle cx="417.6" cy="152.5" r="3"/><circle cx="420.2" cy="154.4" r="3"/><circle cx="435.4" cy="148.0" r="3"/><circle cx="452.0" cy="147.2" r="3"/><circle cx="438.4" cy="157.4" r="3"/><circle cx="441.8" cy="163.8" r="3"/><circle cx="407.0" cy="174.0" r="3"/><circle cx="412.3" cy="179.7" r="3"/><circle cx="407.4" cy="180.8" r="3"/><circle cx="441.4" cy="176.3" r="3"/><circle cx="449.7" cy="178.2" r="3"/><circle cx="448.2" cy="180.1" r="3"/><circle cx="456.1" cy="165.0" r="3"/><circle cx="457.3" cy="166.9" r="3"/><circle cx="458.4" cy="168.7" r="3"/><circle cx="456.1" cy="169.5" r="3"/><circle cx="459.1" cy="166.5" r="3"/><circle cx="456.9" cy="167.2" r="3"/><circle cx="457.6" cy="168.0" r="3"/><circle cx="457.3" cy="166.1" r="3"/><circle cx="458.0" cy="167.6" r="3"/><circle cx="433.5" cy="185.4" r="3"/><circle cx="437.2" cy="191.4" r="3"/><circle cx="435.7" cy="194.4" r="3"/><circle cx="436.5" cy="193.7" r="3"/><circle cx="436.1" cy="192.9" r="3"/><circle cx="439.1" cy="189.1" r="3"/><circle cx="431.6" cy="192.9" r="3"/><circle cx="433.5" cy="192.2" r="3"/><circle cx="447.8" cy="191.4" r="3"/><circle cx="421.0" cy="189.1" r="3"/><circle cx="408.9" cy="192.2" r="3"/><circle cx="422.1" cy="202.0" r="3"/><circle cx="429.7" cy="202.7" r="3"/><circle cx="426.3" cy="206.1" r="3"/><circle cx="454.6" cy="223.5" r="3"/><circle cx="416.8" cy="229.2" r="3"/><circle cx="422.5" cy="228.4" r="3"/><circle cx="426.7" cy="227.3" r="3"/><circle cx="430.4" cy="228.8" r="3"/><circle cx="428.2" cy="228.0" r="3"/><circle cx="435.0" cy="229.9" r="3"/><circle cx="440.3" cy="230.7" r="3"/><circle cx="425.5" cy="233.7" r="3"/><circle cx="427.8" cy="238.6" r="3"/><circle cx="413.8" cy="234.4" r="3"/><circle cx="397.6" cy="226.5" r="3"/><circle cx="404.0" cy="240.1" r="3"/><circle cx="411.6" cy="239.4" r="3"/><circle cx="412.3" cy="240.9" r="3"/><circle cx="411.9" cy="240.1" r="3"/><circle cx="411.6" cy="239.7" r="3"/><circle cx="398.3" cy="246.1" r="3"/><circle cx="333.0" cy="230.7" r="3"/><circle cx="334.2" cy="234.4" r="3"/><circle cx="340.2" cy="233.7" r="3"/><circle cx="345.5" cy="235.6" r="3"/><circle cx="347.8" cy="237.8" r="3"/><circle cx="326.2" cy="239.4" r="3"/><circle cx="338.3" cy="242.0" r="3"/><circle cx="336.4" cy="244.3" r="3"/><circle cx="360.6" cy="234.8" r="3"/><circle cx="360.6" cy="237.5" r="3"/><circle cx="361.7" cy="243.5" r="3"/><circle cx="331.1" cy="248.8" r="3"/><circle cx="332.6" cy="249.9" r="3"/><circle cx="331.9" cy="249.2" r="3"/><circle cx="317.5" cy="248.0" r="3"/><circle cx="314.5" cy="251.8" r="3"/><circle cx="309.6" cy="255.2" r="3"/><circle cx="344.4" cy="251.1" r="3"/><circle cx="349.3" cy="252.6" r="3"/><circle cx="373.4" cy="246.1" r="3"/><circle cx="375.7" cy="249.2" r="3"/><circle cx="349.3" cy="263.5" r="3"/><circle cx="359.8" cy="264.6" r="3"/><circle cx="360.6" cy="267.3" r="3"/><circle cx="367.4" cy="265.4" r="3"/><circle cx="377.2" cy="268.0" r="3"/><circle cx="379.5" cy="274.1" r="3"/><circle cx="381.4" cy="261.3" r="3"/><circle cx="390.4" cy="273.0" r="3"/><circle cx="367.0" cy="277.1" r="3"/><circle cx="422.5" cy="262.8" r="3"/><circle cx="423.3" cy="265.0" r="3"/><circle cx="413.1" cy="274.1" r="3"/><circle cx="324.3" cy="270.3" r="3"/><circle cx="329.6" cy="280.5" r="3"/><circle cx="306.6" cy="278.2" r="3"/><circle cx="299.0" cy="280.5" r="3"/><circle cx="304.0" cy="297.9" r="3"/><circle cx="312.6" cy="298.6" r="3"/><circle cx="335.7" cy="305.4" r="3"/><circle cx="336.0" cy="305.4" r="3"/><circle cx="351.2" cy="296.7" r="3"/><circle cx="295.6" cy="306.2" r="3"/><circle cx="295.6" cy="308.4" r="3"/><circle cx="261.7" cy="218.6" r="3"/><circle cx="265.4" cy="223.1" r="3"/><circle cx="266.9" cy="224.6" r="3"/><circle cx="279.4" cy="209.1" r="3"/><circle cx="280.9" cy="208.4" r="3"/><circle cx="285.5" cy="207.3" r="3"/><circle cx="291.1" cy="208.4" r="3"/><circle cx="292.6" cy="208.4" r="3"/><circle cx="281.3" cy="229.9" r="3"/><circle cx="281.7" cy="233.7" r="3"/><circle cx="278.7" cy="240.1" r="3"/><circle cx="280.2" cy="240.9" r="3"/><circle cx="283.6" cy="244.3" r="3"/><circle cx="265.1" cy="245.0" r="3"/><circle cx="267.3" cy="249.5" r="3"/><circle cx="292.6" cy="231.8" r="3"/><circle cx="293.8" cy="237.5" r="3"/><circle cx="294.1" cy="241.6" r="3"/><circle cx="300.2" cy="229.2" r="3"/><circle cx="301.3" cy="227.6" r="3"/><circle cx="256.0" cy="262.4" r="3"/><circle cx="265.8" cy="277.1" r="3"/><circle cx="267.3" cy="277.9" r="3"/><circle cx="270.3" cy="276.0" r="3"/><circle cx="271.9" cy="274.5" r="3"/><circle cx="272.6" cy="277.1" r="3"/><circle cx="271.1" cy="275.6" r="3"/><circle cx="269.6" cy="276.7" r="3"/><circle cx="266.6" cy="277.5" r="3"/><circle cx="271.5" cy="275.2" r="3"/><circle cx="267.3" cy="290.3" r="3"/><circle cx="279.4" cy="289.6" r="3"/><circle cx="285.5" cy="282.0" r="3"/><circle cx="262.4" cy="303.9" r="3"/><circle cx="262.0" cy="303.5" r="3"/><circle cx="256.0" cy="310.7" r="3"/><circle cx="258.6" cy="310.0" r="3"/><circle cx="268.1" cy="319.0" r="3"/><circle cx="279.4" cy="312.2" r="3"/><circle cx="282.4" cy="309.2" r="3"/><circle cx="284.3" cy="310.7" r="3"/><circle cx="286.2" cy="312.2" r="3"/><circle cx="283.2" cy="310.3" r="3"/><circle cx="283.6" cy="309.6" r="3"/><circle cx="285.1" cy="311.5" r="3"/><circle cx="283.2" cy="317.5" r="3"/><circle cx="290.0" cy="314.9" r="3"/><circle cx="260.2" cy="334.1" r="3"/><circle cx="257.9" cy="348.5" r="3"/><circle cx="410.8" cy="288.4" r="3"/><circle cx="411.9" cy="293.3" r="3"/><circle cx="412.3" cy="293.7" r="3"/><circle cx="416.1" cy="305.4" r="3"/><circle cx="419.1" cy="311.8" r="3"/><circle cx="408.2" cy="319.4" r="3"/><circle cx="409.7" cy="317.9" r="3"/><circle cx="412.7" cy="318.6" r="3"/><circle cx="415.3" cy="318.6" r="3"/><circle cx="427.8" cy="323.2" r="3"/><circle cx="429.7" cy="324.3" r="3"/><circle cx="431.2" cy="336.8" r="3"/><circle cx="432.0" cy="339.4" r="3"/><circle cx="431.6" cy="342.4" r="3"/><circle cx="431.6" cy="341.3" r="3"/></g></svg>
<div class="t lt" style="left:712.40px;top:443.50px;font-size:18.75px;line-height:20px;color:#7e7f83;">Sales by Date</div>
<svg class="abs" style="left:516px;top:430px" width="508" height="357" viewBox="516 430 508 357" shape-rendering="auto"><rect x="612.5" y="758.5" width="404.5" height="1" fill="#e9e9e9"/><rect x="612.5" y="691.6" width="404.5" height="1" fill="#e9e9e9"/><rect x="612.5" y="624.7" width="404.5" height="1" fill="#e9e9e9"/><rect x="612.5" y="557.8" width="404.5" height="1" fill="#e9e9e9"/><rect x="626.90" y="698.1" width="10.7" height="60.9" fill="#5a1477"/><rect x="639.42" y="610.8" width="10.7" height="148.2" fill="#5a1477"/><rect x="651.94" y="570.3" width="10.7" height="188.7" fill="#5a1477"/><rect x="664.46" y="642.9" width="10.7" height="116.1" fill="#5a1477"/><rect x="676.98" y="571.7" width="10.7" height="187.3" fill="#5a1477"/><rect x="689.50" y="630.7" width="10.7" height="128.3" fill="#5a1477"/><rect x="702.02" y="546.7" width="10.7" height="212.3" fill="#5a1477"/><rect x="714.54" y="670.1" width="10.7" height="88.9" fill="#5a1477"/><rect x="727.06" y="608.6" width="10.7" height="150.4" fill="#5a1477"/><rect x="739.58" y="678.2" width="10.7" height="80.8" fill="#5a1477"/><rect x="752.10" y="494.0" width="10.7" height="265.0" fill="#5a1477"/><rect x="764.62" y="583.9" width="10.7" height="175.1" fill="#5a1477"/><rect x="777.14" y="623.0" width="10.7" height="136.0" fill="#5a1477"/><rect x="789.66" y="607.1" width="10.7" height="151.9" fill="#5a1477"/><rect x="802.18" y="618.2" width="10.7" height="140.8" fill="#5a1477"/><rect x="814.70" y="599.0" width="10.7" height="160.0" fill="#5a1477"/><rect x="827.22" y="680.1" width="10.7" height="78.9" fill="#5a1477"/><rect x="839.74" y="624.1" width="10.7" height="134.9" fill="#5a1477"/><rect x="852.26" y="617.4" width="10.7" height="141.6" fill="#5a1477"/><rect x="864.78" y="607.1" width="10.7" height="151.9" fill="#5a1477"/><rect x="877.30" y="659.4" width="10.7" height="99.6" fill="#5a1477"/><rect x="889.82" y="678.2" width="10.7" height="80.8" fill="#5a1477"/><rect x="902.34" y="624.4" width="10.7" height="134.6" fill="#5a1477"/><rect x="914.86" y="624.8" width="10.7" height="134.2" fill="#5a1477"/><rect x="927.38" y="669.8" width="10.7" height="89.2" fill="#5a1477"/><rect x="939.90" y="638.8" width="10.7" height="120.2" fill="#5a1477"/><rect x="952.42" y="649.9" width="10.7" height="109.1" fill="#5a1477"/><rect x="964.94" y="599.0" width="10.7" height="160.0" fill="#5a1477"/><rect x="977.46" y="605.6" width="10.7" height="153.4" fill="#5a1477"/><rect x="989.98" y="612.0" width="10.7" height="147.0" fill="#5a1477"/><rect x="613" y="494.0" width="404" height="126.0" fill="#e8853b" fill-opacity=".235"/><rect x="613" y="619.35" width="404" height="1.3" fill="#e58a45"/></svg>
<div class="t" style="right:414.7px;top:548.29px;font-size:11.85px;line-height:20px;color:#5c6066">$6,000.00</div>
<div class="t" style="right:414.7px;top:615.19px;font-size:11.85px;line-height:20px;color:#5c6066">$4,000.00</div>
<div class="t" style="right:414.7px;top:682.09px;font-size:11.85px;line-height:20px;color:#5c6066">$2,000.00</div>
<div class="t" style="right:414.7px;top:748.99px;font-size:11.85px;line-height:20px;color:#5c6066">$0.00</div>
<div class="t" style="left:473.6px;top:616.0px;width:120px;text-align:center;font-size:11.7px;line-height:20px;color:#5c6066;transform:rotate(-90deg)">Total Sale Price ($)</div>
<div class="t" style="left:621.5px;width:60px;text-align:center;top:773.15px;font-size:11.1px;line-height:20px;color:#5c6066">Jun 26</div>
<div class="t" style="left:708.9px;width:60px;text-align:center;top:773.15px;font-size:11.1px;line-height:20px;color:#5c6066">Jul 03</div>
<div class="t" style="left:796.4px;width:60px;text-align:center;top:773.15px;font-size:11.1px;line-height:20px;color:#5c6066">Jul 10</div>
<div class="t" style="left:884.2px;width:60px;text-align:center;top:773.15px;font-size:11.1px;line-height:20px;color:#5c6066">Jul 17</div>
<div class="t" style="left:971.0px;width:60px;text-align:center;top:773.15px;font-size:11.1px;line-height:20px;color:#5c6066">Jul 24</div>
<div class="abs" style="left:910.9px;top:483.2px;width:106.3px;height:18.4px;border:1.1px solid #e47a2c;border-radius:9.2px;background:#fff"></div>
<div class="t" style="left:921.20px;top:482.69px;font-size:11.85px;line-height:20px;color:#e47a2c;font-weight:bold;-webkit-text-stroke:.3px #e47a2c;">Above Average</div>
<div class="abs" style="left:953.3px;top:609.7px;width:63.9px;height:18.4px;border:1.1px solid #e47a2c;border-radius:9.2px;background:#fff"></div>
<div class="t" style="left:964.30px;top:608.94px;font-size:12.3px;line-height:20px;color:#e47a2c;font-weight:bold;-webkit-text-stroke:.3px #e47a2c;">Median</div>
<div class="abs" style="left:0;top:785.4px;width:1024px;height:1.6px;background:#5e5e5e"></div>
</body>
</html>
